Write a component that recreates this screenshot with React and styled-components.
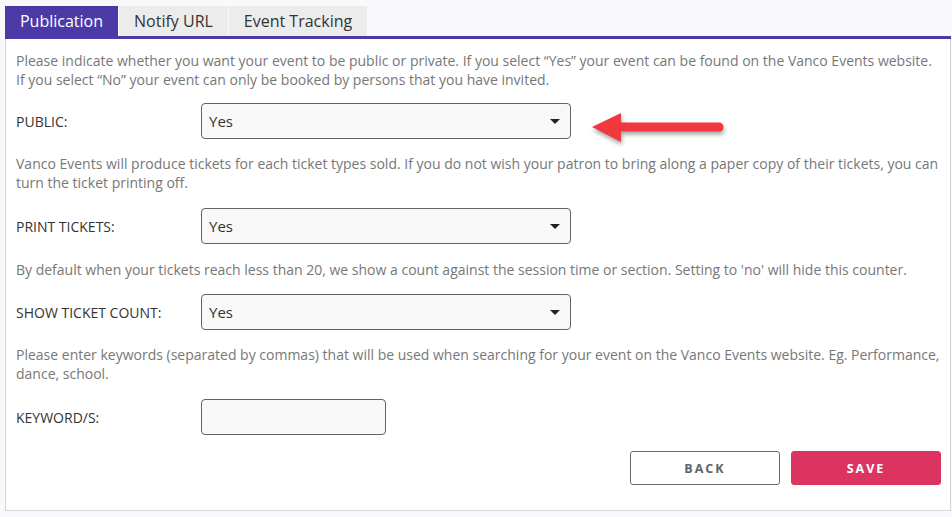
import React from "react"
import styled, { createGlobalStyle } from "styled-components"

const GlobalStyle = createGlobalStyle`
  html, body {
    margin: 0;
    padding: 0;
    background: #f9f9fb;
    font-family: "Open Sans", "Noto Sans", sans-serif;
  }
`

const Page = styled.div`
  position: relative;
  padding: 6px 1px 0 5px;
  height: 517px;
  box-sizing: border-box;
`

const TabBar = styled.div`
  display: flex;
  gap: 1px;
  height: 30px;
  border-bottom: 3px solid #4b3aa6;
`

const Tab = styled.div`
  display: flex;
  align-items: center;
  justify-content: center;
  width: ${props => props.width}px;
  font-size: 16px;
  color: ${props => (props.active ? "#ffffff" : "#333333")};
  background: ${props => (props.active ? "#4b3aa6" : "#ececec")};
`

const Panel = styled.div`
  background: #ffffff;
  border: 1px solid #d4d4d6;
  border-top: none;
  height: 472px;
  box-sizing: border-box;
  padding: 12px 9px 0 10px;
`

const Text = styled.p`
  margin: ${props => props.top || 0}px 0 0 0;
  font-size: 14px;
  line-height: 19px;
  color: #777777;
`

const Row = styled.div`
  display: flex;
  align-items: center;
  margin-top: ${props => props.top || 0}px;
`

const Label = styled.div`
  width: 185px;
  font-size: 14px;
  color: #333333;
  text-transform: uppercase;
`

const SelectBox = styled.div`
  display: flex;
  align-items: center;
  justify-content: space-between;
  width: ${props => props.width || 370}px;
  height: 36px;
  box-sizing: border-box;
  padding: 0 10px 0 7px;
  border: 1px solid #5f6466;
  border-radius: 4px;
  background: #f8f8f8;
  font-size: 15px;
  color: #333333;
`

const Caret = styled.span`
  width: 0;
  height: 0;
  border-left: 5px solid transparent;
  border-right: 5px solid transparent;
  border-top: 5px solid #222222;
`

const Actions = styled.div`
  display: flex;
  justify-content: flex-end;
  gap: 11px;
  margin-top: 16px;
`

const Button = styled.button`
  width: 150px;
  height: 34px;
  border-radius: 3px;
  border: 1px solid ${props => (props.primary ? "#dc3461" : "#666c6e")};
  background: ${props => (props.primary ? "#dc3461" : "#ffffff")};
  color: ${props => (props.primary ? "#ffffff" : "#5f6466")};
  font-family: "Open Sans", sans-serif;
  font-weight: 700;
  font-size: 12.5px;
  letter-spacing: 2px;
`

const Arrow = styled.svg`
  position: absolute;
  left: 588px;
  top: 107px;
  filter: drop-shadow(1px 3px 2px rgba(0, 0, 0, 0.35));
`

const Field = ({ label, value, width, top }) => (
  <Row top={top}>
    <Label>{label}</Label>
    <SelectBox width={width}>
      <span>{value}</span>
      {value !== undefined && <Caret />}
    </SelectBox>
  </Row>
)

const App = () => (
  <>
    <GlobalStyle />
    <Page>
      <TabBar>
        <Tab active width={113}>Publication</Tab>
        <Tab width={109}>Notify URL</Tab>
        <Tab width={138}>Event Tracking</Tab>
      </TabBar>
      <Panel>
        <Text>
          Please indicate whether you want your event to be public or private. If you select “Yes” your event can be found on the Vanco Events website.
          If you select “No” your event can only be booked by persons that you have invited.
        </Text>
        <Field label="Public:" value="Yes" top={14} />
        <Text top={15}>
          Vanco Events will produce tickets for each ticket types sold. If you do not wish your patron to bring along a paper copy of their tickets, you can turn the ticket printing off.
        </Text>
        <Field label="Print tickets:" value="Yes" top={16} />
        <Text top={16}>
          By default when your tickets reach less than 20, we show a count against the session time or section. Setting to 'no' will hide this counter.
        </Text>
        <Field label="Show ticket count:" value="Yes" top={15} />
        <Text top={15}>
          Please enter keywords (separated by commas) that will be used when searching for your event on the Vanco Events website. Eg. Performance, dance, school.
        </Text>
        <Field label="Keyword/s:" width={185} top={16} />
        <Actions>
          <Button>BACK</Button>
          <Button primary>SAVE</Button>
        </Actions>
      </Panel>
      <Arrow width="140" height="40" viewBox="0 0 140 40">
        <path d="M 4 20 L 33 6 L 33 35 Z" fill="#f0383e" />
        <line x1="30" y1="20" x2="131" y2="20" stroke="#f0383e" strokeWidth="9" strokeLinecap="round" />
      </Arrow>
    </Page>
  </>
)

export default App
